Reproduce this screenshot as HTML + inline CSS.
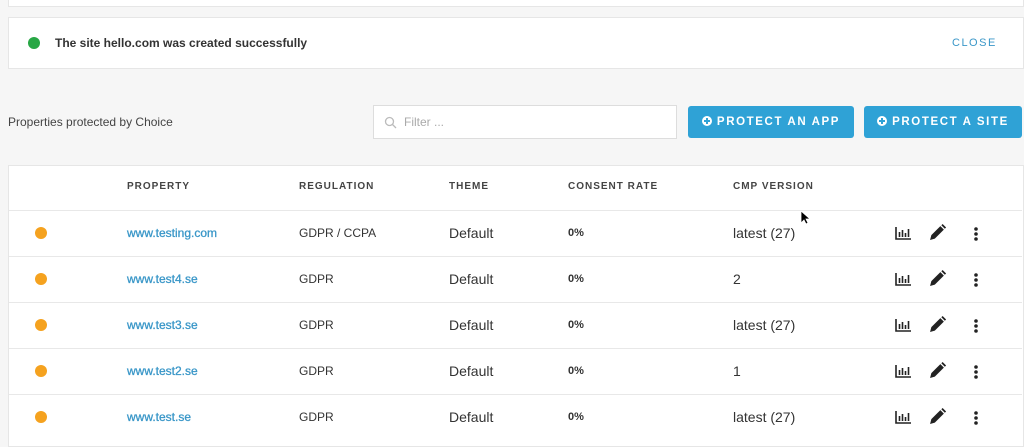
<!DOCTYPE html>
<html><head><style>
body{margin:0;width:1024px;height:436px;background:#f6f6f6;font-family:"Liberation Sans",sans-serif;position:relative;overflow:hidden;color:#333}
.card{position:absolute;background:#fff;border:1px solid #e6e6e6}
.abs{position:absolute}
.btn{position:absolute;top:106px;height:32px;background:#2fa2d6;color:#fff;border-radius:3px;font-size:11.5px;font-weight:bold;letter-spacing:1.6px;line-height:32px;text-align:center}
.btn i{display:inline-block;width:10px;height:10px;border-radius:50%;background:#fff;vertical-align:-1px;margin-right:5px;position:relative}
.btn i:before,.btn i:after{content:"";position:absolute;background:#2fa2d6;left:2px;top:4px;width:6px;height:2px}
.btn i:after{left:4px;top:2px;width:2px;height:6px}
.th{position:absolute;top:181px;font-size:10px;font-weight:bold;letter-spacing:1px;color:#444}
.row{position:absolute;left:9px;width:1013px;height:46px;border-top:1px solid #e8e8e8;font-size:13px}
.row span{position:absolute;top:0;line-height:44px}
.dot{width:12px;height:12px;border-radius:50%;background:#f5a21f;left:26px;top:16px!important}
.lk{color:#3a97c8;font-size:12px;-webkit-text-stroke:.3px #3a97c8}
</style></head><body>
<div class="card" style="left:8px;top:-2px;width:1014px;height:7px"></div>
<div class="card" style="left:8px;top:17px;width:1014px;height:50px">
 <div class="abs" style="left:19px;top:19px;width:12px;height:12px;border-radius:50%;background:#28a745"></div>
 <div class="abs" style="left:46px;top:18px;font-size:12px;font-weight:bold;color:#333">The site hello.com was created successfully</div>
 <div class="abs" style="left:943px;top:19px;font-size:11px;letter-spacing:1.5px;color:#3a97c8">CLOSE</div>
</div>
<div class="abs" style="left:8px;top:115px;font-size:12px;color:#444">Properties protected by Choice</div>
<div class="card" style="left:373px;top:105px;width:302px;height:32px;border-color:#ddd">
 <svg class="abs" style="left:10px;top:10px" width="13" height="13" viewBox="0 0 13 13"><circle cx="5.5" cy="5.5" r="4" fill="none" stroke="#bbb" stroke-width="1.3"/><path d="M8.5 8.5L12 12" stroke="#bbb" stroke-width="1.3"/></svg>
 <div class="abs" style="left:30px;top:9px;font-size:12px;color:#aaa">Filter ...</div>
</div>
<div class="btn" style="left:688px;width:166px"><i></i>PROTECT AN APP</div>
<div class="btn" style="left:864px;width:158px"><i></i>PROTECT A SITE</div>
<div class="card" style="left:8px;top:165px;width:1014px;height:280px"></div>
<div class="th" style="left:127px">PROPERTY</div>
<div class="th" style="left:299px">REGULATION</div>
<div class="th" style="left:449px">THEME</div>
<div class="th" style="left:568px">CONSENT RATE</div>
<div class="th" style="left:733px">CMP VERSION</div>
<svg class="abs" style="left:800px;top:210px" width="10" height="16" viewBox="0 0 10 16"><path d="M1 1v12l3-3 2 4 2-1-2-4h4z" fill="#000" stroke="#fff" stroke-width=".8"/></svg>
<div id="rows"></div>
<script>
var d=[["www.testing.com","GDPR / CCPA","latest (27)"],["www.test4.se","GDPR","2"],["www.test3.se","GDPR","latest (27)"],["www.test2.se","GDPR","1"],["www.test.se","GDPR","latest (27)"]];
var h="";d.forEach(function(r,i){h+='<div class="row" style="top:'+(210+i*46)+'px"><span class="dot"></span><span class="lk" style="left:118px">'+r[0]+'</span><span style="left:290px;font-size:12px">'+r[1]+'</span><span style="left:440px;font-size:14px">Default</span><span style="left:559px;font-size:11px;font-weight:bold">0%</span><span style="left:724px;font-size:14px">'+r[2]+'</span>'+
'<svg style="position:absolute;left:886px;top:15px" width="17" height="14" viewBox="0 0 17 14"><path d="M1 1v12h15" stroke="#222" stroke-width="1.6" fill="none"/><path d="M4.5 6v5M7.5 4v7M10.5 7v4M13.5 3v8" stroke="#222" stroke-width="1.6"/></svg>'+
'<svg style="position:absolute;left:920px;top:13px" width="17" height="17" viewBox="0 0 16 16"><path d="M1 15l1.2-4.5 8.5-8.5 3.3 3.3-8.5 8.5z M11.6 1.2l1.2-1.2 3.3 3.3-1.2 1.2z" fill="#222"/></svg>'+
'<svg style="position:absolute;left:964px;top:15px" width="6" height="16" viewBox="0 0 6 16"><circle cx="3" cy="3" r="1.8" fill="#222"/><circle cx="3" cy="8" r="1.8" fill="#222"/><circle cx="3" cy="13" r="1.8" fill="#222"/></svg></div>'});
document.getElementById("rows").innerHTML=h;
</script>
</body></html>
